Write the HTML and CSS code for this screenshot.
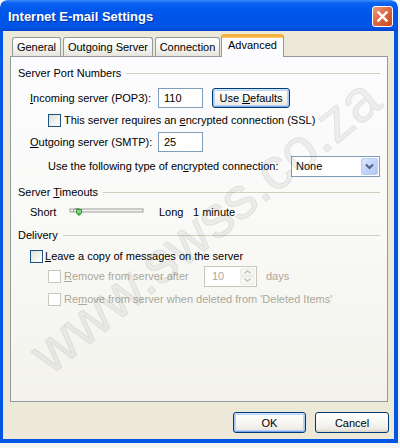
FILE: index.html
```html
<!DOCTYPE html>
<html>
<head>
<meta charset="utf-8">
<link rel="stylesheet" href="styles.css">
</head>
<body>
<div class="window">
  <div class="titlebar">
    <span class="title">Internet E-mail Settings</span>
    <div class="close">
      <svg width="21" height="21" viewBox="0 0 21 21"><path d="M6 6 L15 15 M15 6 L6 15" stroke="#fff" stroke-width="2.6" stroke-linecap="square"/></svg>
    </div>
  </div>
  <div class="body">
    <div class="tabs">
      <div class="tab t-general">General</div>
      <div class="tab t-outgoing">Outgoing Server</div>
      <div class="tab t-connection">Connection</div>
      <div class="tab active">Advanced</div>
    </div>
    <div class="panel">
      <div class="group-head mt9"><span>Server Port Numbers</span><i class="rule"></i></div>

      <div class="row h20 mt8">
        <span class="lbl ind1 w128"><u>I</u>ncoming server (POP3):</span>
        <div class="textbox w45">110</div>
        <div class="btn defaults focus"><span>Use <u>D</u>efaults</span></div>
      </div>

      <div class="row h14 mt5">
        <span class="check ind2"></span>
        <span class="ctext">This server requires an <u>e</u>ncrypted connection (SSL)</span>
      </div>

      <div class="row h20 mt5">
        <span class="lbl ind1 w128"><u>O</u>utgoing server (SMTP):</span>
        <div class="textbox w45">25</div>
      </div>

      <div class="row h20 mt4">
        <span class="lbl ind2 w243">Use the following type of en<u>c</u>rypted connection:</span>
        <div class="select">
          <span class="sel-text">None</span>
          <span class="sel-btn">
            <svg width="9" height="7" viewBox="0 0 9 7"><path d="M1 1.5 L4.5 5 L8 1.5" fill="none" stroke="#4D6185" stroke-width="2"/></svg>
          </span>
        </div>
      </div>

      <div class="group-head mt9"><span>Server <u>T</u>imeouts</span><i class="rule"></i></div>

      <div class="row h16 mt5">
        <span class="lbl ind1 w36">Short</span>
        <svg class="slider" width="80" height="16" viewBox="0 0 80 16">
          <rect x="4" y="5" width="73" height="3" fill="#F4F4F0" stroke="#9D9D98" stroke-width="1"/>
          <path d="M7.5 8 C7.5 5.5 8.5 4.5 11 4.5 L13.5 4.5" fill="none" stroke="#8C8C86" stroke-width="1"/>
          <path d="M10.5 5.5 L15.5 5.5 L15.5 9 L13 11.5 L10.5 9 Z" fill="#8BD18B" stroke="#21A121" stroke-width="1"/>
          <path d="M11.5 10 L14.5 10" stroke="#1E8A1E" stroke-width="1"/>
        </svg>
        <span class="lbl long">Long</span>
        <span class="lbl">1 minute</span>
      </div>

      <div class="group-head mt8"><span>Delivery</span><i class="rule"></i></div>

      <div class="row h14 mt7">
        <span class="check ind1"></span>
        <span class="ctext tight"><u>L</u>eave a copy of messages on the server</span>
      </div>

      <div class="row h20 mt3 disabled">
        <span class="check dis ind2"></span>
        <span class="ctext w140"><u>R</u>emove from server after</span>
        <div class="spinner">
          <span class="spin-text">10</span>
          <span class="spin-btns">
            <span class="spin-b"><svg width="7" height="4" viewBox="0 0 7 4"><path d="M0.5 3.5 L3.5 0.8 L6.5 3.5" fill="none" stroke="#C3C2B8" stroke-width="1.3"/></svg></span>
            <span class="spin-b"><svg width="7" height="4" viewBox="0 0 7 4"><path d="M0.5 0.5 L3.5 3.2 L6.5 0.5" fill="none" stroke="#C3C2B8" stroke-width="1.3"/></svg></span>
          </span>
        </div>
        <span class="days">days</span>
      </div>

      <div class="row h14 mt6 disabled">
        <span class="check dis ind2"></span>
        <span class="ctext">Re<u>m</u>ove from server when deleted from 'Deleted Items'</span>
      </div>
    </div>
    <div class="footer">
      <div class="btn ok focus">OK</div>
      <div class="btn cancel">Cancel</div>
    </div>
  </div>
</div>
<div class="watermark">www.swss.co.za</div>
</body>
</html>
```

FILE: styles.css
```css
html, body {
  margin: 0;
  padding: 0;
}
body {
  position: relative;
  width: 400px;
  height: 448px;
  overflow: hidden;
  background: #F4F4F4;
  font-family: "Liberation Sans", Arial, sans-serif;
  font-size: 11px;
  color: #000;
}
u { text-decoration: underline; text-underline-offset: 1px; }

.window {
  width: 398px;
  height: 443px;
  display: flex;
  flex-direction: column;
  overflow: hidden;
  border-radius: 7px 7px 0 0;
}

.titlebar {
  height: 31px;
  flex: none;
  display: flex;
  align-items: center;
  padding: 0 5px 0 8px;
  border-radius: 7px 7px 0 0;
  background: linear-gradient(to bottom, #3D8DF8 0px, #0B62F2 3px, #0058EC 10px, #0055E8 20px, #0055E8 27px, #0046D0 31px);
}
.title {
  flex: 1;
  color: #fff;
  font-weight: bold;
  font-size: 13px;
  text-shadow: 1px 1px 0 #0A2E9A;
  margin-top: 1px;
}
.close {
  width: 21px;
  height: 21px;
  box-sizing: border-box;
  border: 1px solid #fff;
  border-radius: 3px;
  background: linear-gradient(135deg, #EE9A7E 0%, #E06B43 45%, #C9461F 100%);
  display: flex;
  align-items: center;
  justify-content: center;
  margin-top: 2px;
}
.close svg { display: block; }

.body {
  flex: 1;
  display: flex;
  flex-direction: column;
  background: #ECE9D8;
  border-style: solid;
  border-color: #0055E5;
  border-width: 0 4px 4px 3px;
  padding: 4px 6px 0 7px;
}

.tabs {
  display: flex;
  align-items: flex-end;
  height: 22px;
  padding-left: 2px;
  position: relative;
  z-index: 2;
  margin-bottom: -1px;
}
.tab {
  height: 19px;
  box-sizing: border-box;
  border: 1px solid #919B9C;
  border-bottom: none;
  border-radius: 3px 3px 0 0;
  background: linear-gradient(to bottom, #FFFFFF, #F3F3EF 60%, #E6E5DD);
  display: flex;
  align-items: center;
  justify-content: center;
  margin-right: 2px;
  margin-bottom: 1px;
}
.t-general { width: 49px; }
.t-outgoing { width: 90px; }
.t-connection { width: 65px; margin-right: 1px; }
.tab.active {
  width: 63px;
  height: 23px;
  margin-bottom: 0;
  background: #FCFCFE;
  border-top: 3px solid #F5B240;
  border-radius: 3px 3px 0 0;
  align-items: flex-start;
  padding-top: 2px;
  box-shadow: inset 0 1px 0 #FFC86A;
}

.panel {
  height: 346px;
  box-sizing: border-box;
  border: 1px solid #919B9C;
  background: linear-gradient(to bottom, #FCFCFE 0%, #F9F9F7 50%, #F3F2EC 100%);
  display: flex;
  flex-direction: column;
  padding: 0 7px 0 0;
}

.group-head {
  height: 14px;
  display: flex;
  align-items: center;
  padding-left: 7px;
}
.group-head .rule {
  flex: 1;
  height: 1px;
  background: #D0D0BF;
  margin-left: 5px;
  margin-top: 1px;
}

.row {
  display: flex;
  align-items: center;
}
.h14 { height: 14px; }
.h16 { height: 16px; }
.h20 { height: 20px; }
.mt3 { margin-top: 3px; }
.mt4 { margin-top: 4px; }
.mt5 { margin-top: 5px; }
.mt6 { margin-top: 6px; }
.mt7 { margin-top: 7px; }
.mt8 { margin-top: 8px; }
.mt9 { margin-top: 9px; }

.ind1 { margin-left: 19px; }
.ind2 { margin-left: 37px; }
.w128 { width: 128px; flex: none; }
.w243 { width: 243px; flex: none; }
.w36 { width: 36px; flex: none; }
.w140 { width: 140px; flex: none; }
.w45 { width: 45px; }

.lbl { white-space: nowrap; }

.textbox {
  height: 20px;
  box-sizing: border-box;
  border: 1px solid #7F9DB9;
  background: #fff;
  display: flex;
  align-items: center;
  padding-left: 5px;
}

.btn {
  box-sizing: border-box;
  height: 21px;
  border: 1px solid #003C74;
  border-radius: 3px;
  background: linear-gradient(to bottom, #FFFFFF 0%, #F7F7F3 50%, #ECEBE5 85%, #D8D3C8 100%);
  display: flex;
  align-items: center;
  justify-content: center;
  white-space: nowrap;
}
.btn.focus {
  box-shadow: inset 0 1px 0 #CEE7FF, inset 1px 0 0 #A8C8F5, inset -1px 0 0 #A8C8F5, inset 0 -1px 0 #7FA4E8, inset 0 0 0 2px #BCD3F7;
}
.defaults {
  width: 78px;
  height: 20px;
  margin-left: 9px;
}

.check {
  width: 13px;
  height: 13px;
  box-sizing: border-box;
  border: 1px solid #1C5180;
  background: linear-gradient(135deg, #DCDCD7 0%, #F4F4F1 60%, #FFFFFF 100%);
  flex: none;
}
.check.dis {
  border-color: #CAC8BB;
  background: #FFFFFF;
}
.ctext {
  margin-left: 3px;
  white-space: nowrap;
}
.ctext.tight { margin-left: 2px; }

.select {
  width: 89px;
  height: 21px;
  box-sizing: border-box;
  border: 1px solid #7F9DB9;
  background: #fff;
  display: flex;
  align-items: center;
  padding: 1px;
}
.sel-text { flex: 1; padding-left: 3px; }
.sel-btn {
  width: 17px;
  height: 17px;
  box-sizing: border-box;
  border: 1px solid #B9CDF9;
  border-radius: 2px;
  background: linear-gradient(135deg, #DCE7FD 0%, #C4D5FB 50%, #B1C6F4 100%);
  display: flex;
  align-items: center;
  justify-content: center;
}
.sel-btn svg { display: block; }

.slider { display: block; flex: none; }
.long { margin-left: 13px; width: 34px; }

.disabled { color: #ACA899; }

.spinner {
  width: 53px;
  height: 21px;
  box-sizing: border-box;
  border: 1px solid #C9C7BA;
  background: #fff;
  display: flex;
  align-items: stretch;
  padding: 1px;
}
.spin-text {
  flex: 1;
  display: flex;
  align-items: center;
  padding-left: 6px;
}
.spin-btns {
  width: 15px;
  display: flex;
  flex-direction: column;
}
.spin-b {
  flex: 1;
  box-sizing: border-box;
  border: 1px solid #EBEAE4;
  border-radius: 2px;
  background: #F6F6F3;
  display: flex;
  align-items: center;
  justify-content: center;
}
.spin-b svg { display: block; }
.days { margin-left: 9px; }

.footer {
  display: flex;
  justify-content: flex-end;
  padding-top: 10px;
  gap: 9px;
}
.ok { width: 73px; }
.cancel { width: 74px; margin-right: -1px; }

.watermark {
  position: absolute;
  left: 205px;
  top: 226px;
  transform: translate(-50%, -50%) rotate(-39deg);
  font-family: "Liberation Sans", Arial, sans-serif;
  font-size: 59px;
  line-height: 1;
  white-space: nowrap;
  color: rgba(140, 140, 140, 0.12);
  -webkit-text-stroke: 1px rgba(110, 110, 110, 0.12);
  pointer-events: none;
  z-index: 5;
}
```
